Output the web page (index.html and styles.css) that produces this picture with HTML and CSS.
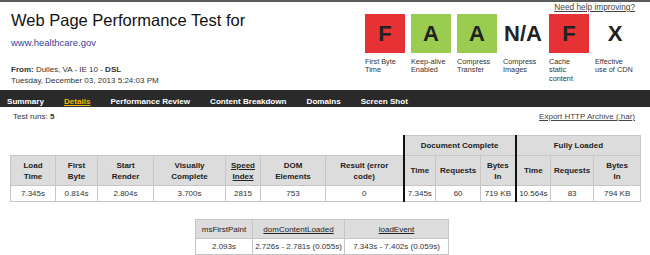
FILE: index.html
```html
<!DOCTYPE html>
<html>
<head>
    <title>WebPagetest Test Result - www.healthcare.gov</title>
    <link rel="stylesheet" href="styles.css">
</head>
<body>

<!-- Test header with grades -->
<div class="header">
    <div class="testInfo">
        <h1>Web Page Performance Test for</h1>
        <a class="testUrl" href="#">www.healthcare.gov</a>
        <div class="testMeta">
            <b>From:</b> Dulles, VA - IE 10 - <b>DSL</b><br>
            Tuesday, December 03, 2013 5:24:03 PM
        </div>
    </div>
    <div class="grades">
        <a class="helpLink" href="#">Need help improving?</a>
        <ul class="gradeList">
            <li><div class="grade gradeF">F</div><span class="gradeLabel">First Byte<br>Time</span></li>
            <li><div class="grade gradeA">A</div><span class="gradeLabel">Keep-alive<br>Enabled</span></li>
            <li><div class="grade gradeA">A</div><span class="gradeLabel">Compress<br>Transfer</span></li>
            <li><div class="grade">N/A</div><span class="gradeLabel">Compress<br>Images</span></li>
            <li><div class="grade gradeF">F</div><span class="gradeLabel">Cache<br>static<br>content</span></li>
            <li><div class="grade">X</div><span class="gradeLabel">Effective<br>use of CDN</span></li>
        </ul>
    </div>
</div>

<!-- Result tabs -->
<ul class="nav">
    <li><a href="#">Summary</a></li>
    <li><a href="#" class="current">Details</a></li>
    <li><a href="#">Performance Review</a></li>
    <li><a href="#">Content Breakdown</a></li>
    <li><a href="#">Domains</a></li>
    <li><a href="#">Screen Shot</a></li>
</ul>

<div class="runInfo">
    <span>Test runs: <b>5</b></span>
    <a href="#">Export HTTP Archive (.har)</a>
</div>

<!-- Main results table -->
<table class="results">
    <colgroup>
        <col style="width:45px"><col style="width:42px"><col style="width:56px"><col style="width:72px">
        <col style="width:35px"><col style="width:65px"><col style="width:78px">
        <col style="width:32px"><col style="width:45px"><col style="width:35px">
        <col style="width:35px"><col style="width:43px"><col style="width:47px">
    </colgroup>
    <tr class="groupRow">
        <td class="blank" colspan="7"></td>
        <th class="sectionStart" colspan="3">Document Complete</th>
        <th class="sectionStart" colspan="3">Fully Loaded</th>
    </tr>
    <tr class="headRow">
        <th>Load<br>Time</th>
        <th>First<br>Byte</th>
        <th>Start<br>Render</th>
        <th>Visually<br>Complete</th>
        <th><a href="#">Speed<br>Index</a></th>
        <th>DOM<br>Elements</th>
        <th>Result (error<br>code)</th>
        <th class="sectionStart">Time</th>
        <th>Requests</th>
        <th>Bytes<br>In</th>
        <th class="sectionStart">Time</th>
        <th>Requests</th>
        <th>Bytes<br>In</th>
    </tr>
    <tr class="dataRow">
        <td>7.345s</td>
        <td>0.814s</td>
        <td>2.804s</td>
        <td>3.700s</td>
        <td>2815</td>
        <td>753</td>
        <td>0</td>
        <td class="sectionStart">7.345s</td>
        <td>60</td>
        <td>719 KB</td>
        <td class="sectionStart">10.564s</td>
        <td>83</td>
        <td>794 KB</td>
    </tr>
</table>

<!-- Browser timings table -->
<table class="timings">
    <colgroup>
        <col style="width:57px"><col style="width:92px"><col style="width:104px">
    </colgroup>
    <tr class="timingHead">
        <th>msFirstPaint</th>
        <th><a href="#">domContentLoaded</a></th>
        <th><a href="#">loadEvent</a></th>
    </tr>
    <tr class="dataRow">
        <td>2.093s</td>
        <td>2.726s - 2.781s (0.055s)</td>
        <td>7.343s - 7.402s (0.059s)</td>
    </tr>
</table>

</body>
</html>
```

FILE: styles.css
```css
/* General Styles */
body {
    margin: 0;
    font-family: "Liberation Sans", Arial, sans-serif;
    color: #222;
    background-color: #fff;
    border-top: 2px solid #5a5a5a;
}

a {
    color: #333;
}

/* Header */
.header {
    display: flex;
    justify-content: space-between;
    height: 88px;
    padding: 0 15px 0 11px;
}

h1 {
    margin: 9px 0 0;
    font-size: 16.5px;
    line-height: 19px;
    font-weight: normal;
    color: #111;
}

.testUrl {
    display: block;
    margin-top: 7px;
    font-size: 9.5px;
    line-height: 11px;
    color: #3d3d99;
    text-decoration: none;
}

.testMeta {
    margin-top: 16px;
    font-size: 8px;
    line-height: 11px;
    color: #333;
}

/* Grades */
.grades {
    display: flex;
    flex-direction: column;
    align-items: flex-end;
}

.helpLink {
    font-size: 8.3px;
    line-height: 10px;
    color: #444;
}

.gradeList {
    display: flex;
    gap: 6px;
    margin: 2px 0 0;
    padding: 0;
    list-style: none;
}

.grade {
    display: flex;
    align-items: center;
    justify-content: center;
    width: 40px;
    height: 39px;
    font-size: 22px;
    font-weight: bold;
    color: #222;
}

.gradeF {
    background-color: #e63234;
}

.gradeA {
    background-color: #99cc4f;
}

.gradeLabel {
    display: block;
    margin-top: 5px;
    font-size: 7.3px;
    line-height: 8.3px;
    color: #333;
}

/* Tabs */
.nav {
    display: flex;
    align-items: center;
    gap: 20px;
    height: 17px;
    margin: 0;
    padding: 0 0 0 7px;
    list-style: none;
    background-color: #2a2a2a;
}

.nav a {
    font-size: 8.1px;
    font-weight: bold;
    color: #fff;
    text-decoration: none;
}

.nav a.current {
    color: #f2b705;
    text-decoration: underline;
}

.runInfo {
    display: flex;
    justify-content: space-between;
    margin-top: 4px;
    padding: 0 15px 0 13px;
    font-size: 8px;
    line-height: 11px;
    color: #333;
}

.runInfo a {
    color: #444;
}

/* Tables */
table {
    border-collapse: collapse;
    table-layout: fixed;
}

th, td {
    padding: 0 2px;
    border: 1px solid #c6c6c6;
    text-align: center;
    font-size: 8px;
    line-height: 11px;
}

th {
    background-color: #dcdcdc;
    font-weight: bold;
    color: #222;
}

th a {
    color: #222;
}

td {
    color: #333;
}

.results {
    width: 630px;
    margin: 13px 0 0 10px;
}

.results .blank {
    border: none;
    background: none;
}

.results .sectionStart {
    border-left: 2px solid #111;
}

.groupRow {
    height: 20px;
}

.headRow {
    height: 30px;
}

.dataRow {
    height: 16px;
}

.timings {
    width: 253px;
    margin: 17px 0 0 195px;
}

.timings td {
    padding: 0 1px;
    white-space: nowrap;
}

.timingHead {
    height: 19px;
}

.timingHead th {
    font-weight: normal;
}
```
